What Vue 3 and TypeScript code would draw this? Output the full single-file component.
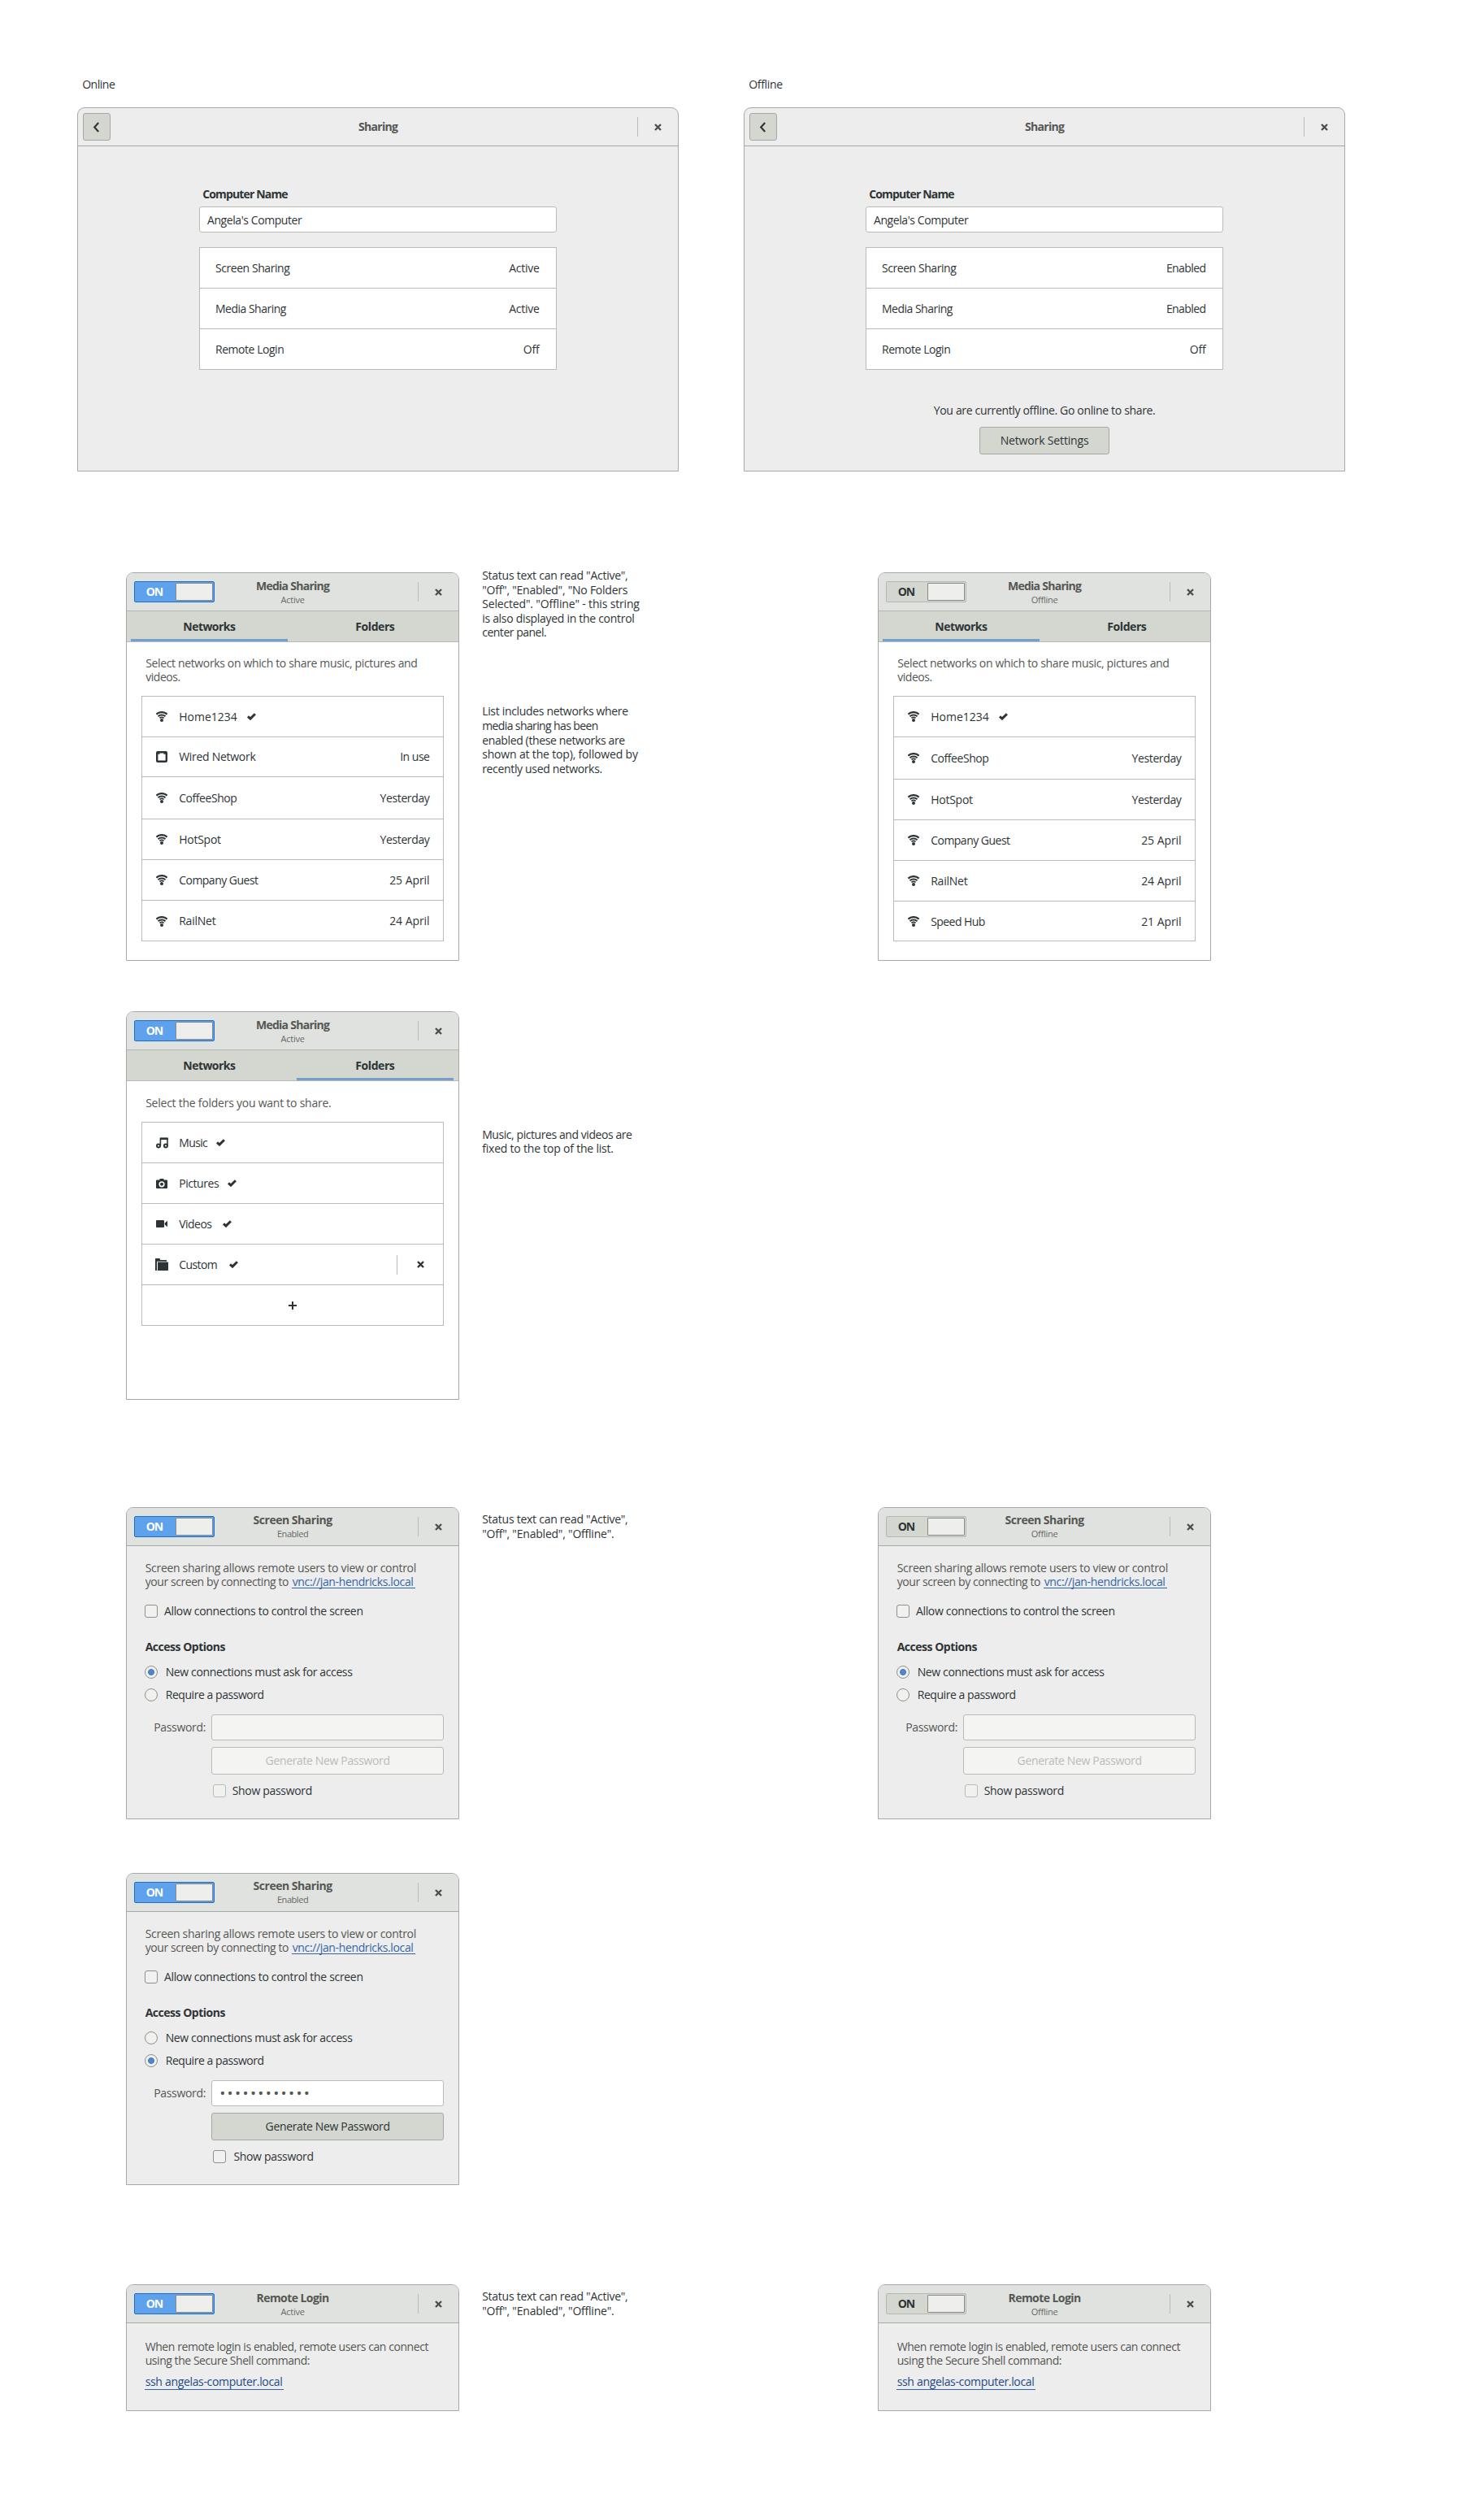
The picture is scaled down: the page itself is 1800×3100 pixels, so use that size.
<script setup lang="ts">
interface Line { text: string; w: number }
interface Item { icon: string; name: Line; check?: number; right?: Line; removable?: boolean; h: number }
interface Note { top: number; lines: Line[] }
interface Dialog {
  kind: 'media' | 'screen' | 'remote'
  title: Line
  sub: Line
  online: boolean
  tab?: number
  desc: Line[]
  items?: Item[]
  add?: boolean
  secret?: boolean
}
interface Row { cls: string; left: Dialog; notes: Note[]; right?: Dialog }

const l = (text: string, w: number): Line => ({ text, w })

// Spreads the letters of a label so that it takes exactly the given width.
const vFit = {
  mounted(el: HTMLElement, binding: { value: number }) {
    const natural = el.getBoundingClientRect().width
    const count = (el.textContent ?? '').length
    const spacing = (binding.value + 1.5 - natural) / count
    el.style.letterSpacing = `${spacing.toFixed(3)}px`
  },
}

const panels = [
  { caption: l('Online', 39.8), offline: false, status: [l('Active', 37), l('Active', 37), l('Off', 19.4)] },
  { caption: l('Offline', 41.3), offline: true, status: [l('Enabled', 48.3), l('Enabled', 48.3), l('Off', 19.4)] },
]
const services = [l('Screen Sharing', 91), l('Media Sharing', 86.6), l('Remote Login', 84)]

const home: Item = { icon: 'wifi', name: l('Home1234', 71.3), check: 11.5, h: 50 }
const wifi = (name: Line, right: Line, h: number): Item => ({ icon: 'wifi', name, right, h })
const yesterday = l('Yesterday', 60.7)
const netDesc = [l('Select networks on which to share music, pictures and', 334), l('videos.', 42.3)]
const statusNote = [l('Status text can read "Active",', 179), l('"Off", "Enabled", "Offline".', 162)]
const screenDesc = [l('Screen sharing allows remote users to view or control', 333)]
const remoteDesc = [l('When remote login is enabled, remote users can connect', 348), l('using the Secure Shell command:', 202)]

const mediaTitle = l('Media Sharing', 90)
const screenTitle = l('Screen Sharing', 96.7)
const remoteTitle = l('Remote Login', 88.7)
const active = l('Active', 29)
const enabled = l('Enabled', 38)
const offline = l('Offline', 32.5)

const rows: Row[] = [
  {
    cls: 'row-networks',
    left: {
      kind: 'media', title: mediaTitle, sub: active, online: true, tab: 0, desc: netDesc,
      items: [
        home,
        { icon: 'wired', name: l('Wired Network', 94), right: l('In use', 36), h: 49 },
        wifi(l('CoffeeShop', 71), yesterday, 52),
        wifi(l('HotSpot', 51.3), yesterday, 50),
        wifi(l('Company Guest', 97), l('25 April', 49), 50),
        wifi(l('RailNet', 45), l('24 April', 49), 50),
      ],
    },
    notes: [
      { top: -5, lines: [
        l('Status text can read "Active",', 179), l('"Off", "Enabled", "No Folders', 178.7),
        l('Selected". "Offline" - this string', 193.3), l('is also displayed in the control', 187), l('center panel.', 78.7),
      ] },
      { top: 79.5, lines: [
        l('List includes networks where', 179.3), l('media sharing has been', 142.3),
        l('enabled (these networks are', 175.3), l('shown at the top), followed by', 191.3), l('recently used networks.', 147.3),
      ] },
    ],
    right: {
      kind: 'media', title: mediaTitle, sub: offline, online: false, tab: 0, desc: netDesc,
      items: [
        home,
        wifi(l('CoffeeShop', 71), yesterday, 52),
        wifi(l('HotSpot', 51.3), yesterday, 50),
        wifi(l('Company Guest', 97), l('25 April', 49), 50),
        wifi(l('RailNet', 45), l('24 April', 49), 50),
        wifi(l('Speed Hub', 66.3), l('21 April', 49), 49),
      ],
    },
  },
  {
    cls: 'row-folders',
    left: {
      kind: 'media', title: mediaTitle, sub: active, online: true, tab: 1, add: true,
      desc: [l('Select the folders you want to share.', 228)],
      items: [
        { icon: 'music', name: l('Music', 34.7), check: 10, h: 50 },
        { icon: 'camera', name: l('Pictures', 48.7), check: 10, h: 50 },
        { icon: 'video', name: l('Videos', 40), check: 12.8, h: 50 },
        { icon: 'folder', name: l('Custom', 46.7), check: 14, h: 50, removable: true },
      ],
    },
    notes: [{ top: 142.5, lines: [l('Music, pictures and videos are', 184), l('fixed to the top of the list.', 161.3)] }],
  },
  {
    cls: 'row-screen',
    left: { kind: 'screen', title: screenTitle, sub: enabled, online: true, desc: screenDesc },
    notes: [{ top: 6, lines: statusNote }],
    right: { kind: 'screen', title: screenTitle, sub: offline, online: false, desc: screenDesc },
  },
  {
    cls: 'row-secret',
    left: { kind: 'screen', title: screenTitle, sub: enabled, online: true, desc: screenDesc, secret: true },
    notes: [],
  },
  {
    cls: 'row-remote',
    left: { kind: 'remote', title: remoteTitle, sub: active, online: true, desc: remoteDesc },
    notes: [{ top: 6, lines: statusNote }],
    right: { kind: 'remote', title: remoteTitle, sub: offline, online: false, desc: remoteDesc },
  },
]

const cells = (row: Row) => [
  { dialog: row.left, notes: null as Note[] | null },
  { dialog: null as Dialog | null, notes: row.notes },
  ...(row.right ? [{ dialog: row.right as Dialog | null, notes: null as Note[] | null }] : []),
]
</script>

<template>
  <main class="board">
    <section class="panels">
      <div v-for="p in panels" :key="p.caption.text" class="panel-col">
        <div class="caption"><span v-fit="p.caption.w" class="t">{{ p.caption.text }}</span></div>
        <div class="panel">
          <header class="panel-head">
            <div class="back">
              <svg width="9" height="13" viewBox="0 0 9 13"><path d="M7.2 1 2.2 6.5l5 5.5" fill="none" stroke="#2e3436" stroke-width="2.1" /></svg>
            </div>
            <span v-fit="47.8" class="t title">Sharing</span>
            <div class="close">
              <svg width="9" height="9" viewBox="0 0 9 9"><path d="M1 1l7 7M8 1l-7 7" stroke="#4c4f4b" stroke-width="2.4" /></svg>
            </div>
          </header>
          <div class="panel-body">
            <div class="name-label"><span v-fit="104.3" class="t">Computer Name</span></div>
            <div class="name-input"><span v-fit="116" class="t">Angela's Computer</span></div>
            <ul class="services">
              <li v-for="(s, i) in services" :key="s.text">
                <span v-fit="s.w" class="t">{{ s.text }}</span>
                <span v-fit="p.status[i].w" class="t">{{ p.status[i].text }}</span>
              </li>
            </ul>
            <div v-if="p.offline" class="offline">
              <span v-fit="272.3" class="t">You are currently offline. Go online to share.</span>
              <button class="settings"><span v-fit="108.5" class="t">Network Settings</span></button>
            </div>
          </div>
        </div>
      </div>
    </section>

    <section v-for="row in rows" :key="row.cls" class="row" :class="row.cls">
      <template v-for="(c, ci) in cells(row)" :key="ci">
        <aside v-if="c.notes" class="notes">
          <div v-for="(n, ni) in c.notes" :key="ni" :style="{ marginTop: n.top + 'px' }">
            <p v-for="line in n.lines" :key="line.text"><span v-fit="line.w" class="t">{{ line.text }}</span></p>
          </div>
        </aside>
        <article v-if="c.dialog" class="dialog" :class="c.dialog.kind">
          <header class="head">
            <div class="switch" :class="{ on: c.dialog.online }">
              <span class="switch-label"><span v-fit="20" class="t">ON</span></span>
              <span class="knob"></span>
            </div>
            <div class="titles">
              <span v-fit="c.dialog.title.w" class="t title">{{ c.dialog.title.text }}</span>
              <span v-fit="c.dialog.sub.w" class="t sub">{{ c.dialog.sub.text }}</span>
            </div>
            <div class="close">
              <svg width="9" height="9" viewBox="0 0 9 9"><path d="M1 1l7 7M8 1l-7 7" stroke="#4c4f4b" stroke-width="2.4" /></svg>
            </div>
          </header>

          <nav v-if="c.dialog.kind === 'media'" class="tabs">
            <div class="tab" :class="{ current: c.dialog.tab === 0 }"><span v-fit="63.7" class="t">Networks</span></div>
            <div class="tab" :class="{ current: c.dialog.tab === 1 }"><span v-fit="47.7" class="t">Folders</span></div>
          </nav>

          <div class="desc" :class="{ single: c.dialog.add }">
            <p v-for="d in c.dialog.desc" :key="d.text"><span v-fit="d.w" class="t">{{ d.text }}</span></p>
            <p v-if="c.dialog.kind === 'screen'" class="connect">
              <span v-fit="176" class="t">your screen by connecting to</span>
              <a class="link vnc"><span v-fit="148.5" class="t">vnc://jan-hendricks.local</span></a>
            </p>
          </div>

          <ul v-if="c.dialog.items" class="list">
            <li v-for="item in c.dialog.items" :key="item.name.text" :style="{ height: item.h + 'px' }">
              <span class="icon">
                <svg v-if="item.icon === 'wifi'" width="14" height="13" viewBox="0 0 14 13">
                  <g fill="none" stroke="#2e3436">
                    <path d="M.4 3.7C3.800.2 10.200.2 13.600 3.700" stroke-width="2.200" />
                    <path d="M2.500 6.200C5 3.900 9 3.900 11.500 6.200" stroke-width="2" />
                    <path d="M4.400 8.300c1.500-1.200 3.700-1.200 5.200 0" stroke-width="1.700" />
                  </g>
                  <circle cx="7" cy="11" r="2" fill="#2e3436" />
                </svg>
                <svg v-else-if="item.icon === 'wired'" width="14" height="14" viewBox="0 0 14 14">
                  <path fill="#2e3436" fill-rule="evenodd" d="M2 0h10a2 2 0 0 1 2 2v10a2 2 0 0 1-2 2H2a2 2 0 0 1-2-2V2a2 2 0 0 1 2-2zM4.5 2.5v1.3H2.4v7.7h9.2V3.8H9.5V2.5z" />
                </svg>
                <svg v-else-if="item.icon === 'music'" width="15" height="14" viewBox="0 0 15 14">
                  <g fill="none" stroke="#2e3436" stroke-width="2">
                    <circle cx="3" cy="10.4" r="2" /><circle cx="11.9" cy="10.4" r="2" />
                    <path d="M5.4 10.4V1.5h8.6v8.9" stroke-width="1.6" />
                    <path d="M5 1.8h9.6" stroke-width="2.6" />
                  </g>
                </svg>
                <svg v-else-if="item.icon === 'camera'" width="14" height="12" viewBox="0 0 14 12">
                  <path fill="#2e3436" d="M4.5 0h5v1.5H13a1 1 0 0 1 1 1V11a1 1 0 0 1-1 1H1a1 1 0 0 1-1-1V2.5a1 1 0 0 1 1-1h3.5z" />
                  <circle cx="7" cy="6.8" r="2.8" fill="none" stroke="#fff" stroke-width="1.6" />
                </svg>
                <svg v-else-if="item.icon === 'video'" width="14" height="9" viewBox="0 0 14 9">
                  <path fill="#2e3436" d="M1 0h8a1 1 0 0 1 1 1v7a1 1 0 0 1-1 1H1a1 1 0 0 1-1-1V1a1 1 0 0 1 1-1zM14 .8v7.4l-3.300-2.600V3.400z" />
                </svg>
                <svg v-else width="16" height="15" viewBox="0 0 16 15">
                  <path fill="#2e3436" d="M.5 0h5l.8 2H14v1.700H2V15H0V.5z" />
                  <path fill="#2e3436" d="M3 4.500h12.500l.5.5v9.500l-.5.5H3z" />
                </svg>
              </span>
              <span v-fit="item.name.w" class="t name">{{ item.name.text }}</span>
              <svg v-if="item.check" class="check" :style="{ marginLeft: item.check + 'px' }" width="11" height="9" viewBox="0 0 11 9">
                <path d="M1 4.400 4 7.100 9.900 1.200" fill="none" stroke="#2e3436" stroke-width="3" />
              </svg>
              <span v-if="item.right" v-fit="item.right.w" class="t right">{{ item.right.text }}</span>
              <span v-if="item.removable" class="remove">
                <svg width="9" height="9" viewBox="0 0 9 9"><path d="M1 1l7 7M8 1l-7 7" stroke="#2e3436" stroke-width="2.4" /></svg>
              </span>
            </li>
            <li v-if="c.dialog.add" class="add">
              <svg width="10" height="10" viewBox="0 0 10 10"><path d="M5 0v10M0 5h10" stroke="#2e3436" stroke-width="2" /></svg>
            </li>
          </ul>

          <div v-if="c.dialog.kind === 'screen'" class="form" :class="{ secret: c.dialog.secret }">
            <div class="option allow"><i class="box"></i><span v-fit="244.5" class="t">Allow connections to control the screen</span></div>
            <h3><span v-fit="98" class="t">Access Options</span></h3>
            <div class="option radio-row"><i class="radio" :class="{ picked: !c.dialog.secret }"></i><span v-fit="229.5" class="t">New connections must ask for access</span></div>
            <div class="option radio-row"><i class="radio" :class="{ picked: c.dialog.secret }"></i><span v-fit="120.7" class="t">Require a password</span></div>
            <div class="password">
              <div class="pw-label"><span v-fit="63.5" class="t">Password:</span></div>
              <div class="pw-input"><span v-if="c.dialog.secret" v-fit="112.8" class="t dots">••••••••••••</span></div>
            </div>
            <button class="generate"><span v-fit="152.7" class="t">Generate New Password</span></button>
            <div class="option show"><i class="box"></i><span v-fit="98" class="t">Show password</span></div>
          </div>

          <p v-if="c.dialog.kind === 'remote'" class="ssh"><a class="link"><span v-fit="168.5" class="t">ssh angelas-computer.local</span></a></p>
        </article>
      </template>
    </section>
  </main>
</template>

<style>
body {
  background: #fff;
}
</style>

<style scoped>
.board {
  box-sizing: border-box;
  width: 1800px;
  height: 3100px;
  padding-top: 95px;
  overflow: hidden;
  background: #fff;
  color: #2e3436;
  font: 14px/18px "Open Sans", "Noto Sans", sans-serif;
}
.board *,
.board *::before,
.board *::after {
  box-sizing: border-box;
}
p,
ul,
h3 {
  margin: 0;
  padding: 0;
  list-style: none;
}
svg {
  display: block;
}
.t {
  display: inline-block;
  flex: none;
  padding: 0 0.5px 0 0.7px;
  white-space: pre;
}

/* Settings panels */
.panels {
  display: flex;
  gap: 80px;
  padding-left: 95px;
}
.panel-col {
  width: 740px;
}
.caption {
  height: 37px;
  padding-left: 5.5px;
}
.panel {
  height: 448px;
  border: 1px solid #a7a9a7;
  border-radius: 9px 9px 0 0;
  background: #ededed;
}
.panel-head {
  display: grid;
  grid-template-columns: 1fr auto 1fr;
  height: 47px;
  border-bottom: 1px solid #a7a9a7;
}
.back {
  display: flex;
  align-items: center;
  justify-content: center;
  width: 34px;
  height: 34px;
  margin: 6px 0 0 6px;
  padding-right: 2px;
  border: 1px solid #a7aaa4;
  border-radius: 3px;
  background: #d3d7cf;
}
.title {
  color: #555753;
  font-weight: 700;
}
.panel-head .title {
  margin-top: 14px;
}
.close {
  display: flex;
  align-items: center;
  justify-content: center;
  justify-self: end;
  width: 50px;
  height: 24px;
  margin-top: 11px;
  border-left: 1px solid #babdb6;
}
.panel-body {
  width: 440px;
  margin: 49.5px auto 0;
}
.name-label {
  height: 24.5px;
  padding-left: 3.5px;
  font-weight: 700;
}
.name-input {
  height: 32px;
  padding: 6.5px 0 0 8.3px;
  border: 1px solid #babdb6;
  border-radius: 3px;
  background: #fff;
}
.services {
  margin-top: 18px;
  border: 1px solid #babdb6;
  background: #fff;
}
.services li {
  display: flex;
  justify-content: space-between;
  height: 50px;
  padding: 16px 20px 0 18.3px;
  border-bottom: 1px solid #babdb6;
}
.services li:last-child {
  height: 49px;
  border-bottom: 0;
}
.offline {
  display: flex;
  flex-direction: column;
  align-items: center;
  margin-top: 40.5px;
}
button {
  display: flex;
  align-items: center;
  justify-content: center;
  height: 34px;
  padding: 0;
  border: 1px solid #a7aaa4;
  border-radius: 3px;
  background: #d3d7cf;
  color: #2e3436;
  font: inherit;
}
.settings {
  width: 160px;
  margin-top: 11.5px;
}

/* Dialog rows */
.row {
  display: grid;
  grid-template-columns: 410px 515px 410px;
  padding-left: 155px;
}
.row-networks {
  height: 478px;
  margin-top: 124px;
}
.row-folders {
  height: 478px;
  margin-top: 62px;
}
.row-screen {
  height: 384px;
  margin-top: 132px;
}
.row-secret {
  height: 384px;
  margin-top: 66px;
}
.row-remote {
  height: 156px;
  margin-top: 122px;
}
.notes {
  padding-left: 27.5px;
}
.notes p {
  height: 17.6px;
}
.dialog {
  border: 1px solid #a7a9a7;
  border-radius: 9px 9px 0 0;
  background: #ededed;
}
.dialog.media {
  background: #fff;
}
.head {
  display: grid;
  grid-template-columns: 1fr auto 1fr;
  height: 47px;
  border-bottom: 1px solid #a7a9a7;
  border-radius: 8px 8px 0 0;
  background: #e0e2df;
}
.media .head {
  border-bottom-color: #b4b7b0;
}
.switch {
  display: flex;
  width: 99px;
  height: 26px;
  margin: 10px 0 0 9px;
  padding: 1px;
  border: 1px solid #b6b9b3;
  border-radius: 2px;
  background: #d3d7cf;
  font-weight: 700;
}
.switch.on {
  border-color: #1c6fcf;
  background: #5ea2ee;
  color: #fff;
}
.switch-label {
  width: 49px;
  padding: 2px 0 0 12px;
}
.knob {
  width: 46px;
  height: 22px;
  border: 1px solid #888a85;
  border-radius: 1px;
  background: #eeeeec;
}
.titles {
  display: flex;
  flex-direction: column;
  align-items: center;
  padding-top: 7px;
}
.screen .titles {
  padding-top: 6px;
}
.sub {
  color: #666864;
  font-size: 11px;
  line-height: 16px;
}
.tabs {
  display: flex;
  height: 38px;
  border-bottom: 1px solid #b8bbb4;
  background: #d3d7cf;
  font-weight: 700;
}
.tab {
  position: relative;
  display: flex;
  justify-content: center;
  width: 204px;
  padding: 10px 1.5px 0 0;
}
.tab.current::after {
  content: "";
  position: absolute;
  bottom: 0;
  left: 5px;
  width: 193px;
  height: 3px;
  background: #729fcf;
}
.desc {
  padding: 17.5px 0 0 22px;
  color: #555753;
}
.desc p {
  height: 17.67px;
}
.media .desc {
  height: 66px;
  padding: 16.5px 0 0 22.5px;
}
.media .desc.single {
  height: 50px;
  padding-top: 17.5px;
}
.list {
  width: 372px;
  margin: 0 0 0 18px;
  border: 1px solid #babdb6;
}
.list li {
  display: flex;
  align-items: center;
  padding: 0 16px;
  border-bottom: 1px solid #babdb6;
}
.list li:last-child {
  border-bottom: 0;
  margin-bottom: -1px;
}
.icon {
  display: flex;
  align-items: center;
  justify-content: center;
  width: 16px;
}
.name {
  margin-left: 12.5px;
}
.right {
  margin-left: auto;
}
.remove {
  display: flex;
  align-items: center;
  justify-content: center;
  width: 57px;
  height: 24px;
  margin-left: auto;
  margin-right: -16px;
  border-left: 1px solid #babdb6;
}
.list .add {
  justify-content: center;
  height: 50px;
}

/* Screen sharing form */
.connect {
  display: flex;
  justify-content: space-between;
  width: 332.5px;
}
.link {
  border-bottom: 1px solid #3465a4;
  color: #3465a4;
}
.vnc {
  display: block;
  width: 151.5px;
  height: 17px;
  line-height: 18px;
}
.form {
  padding: 19.16px 0 0 22px;
}
.option {
  display: flex;
}
.box,
.radio {
  flex: none;
  width: 16px;
  height: 16px;
  border: 1px solid #8e908b;
  border-radius: 3px;
  background: #f1f1f0;
}
.radio {
  display: flex;
  align-items: center;
  justify-content: center;
  border-radius: 50%;
}
.picked::after {
  content: "";
  width: 8px;
  height: 8px;
  border: 1px solid #3b78c4;
  border-radius: 50%;
  background: #5089c8;
}
.allow {
  height: 17px;
}
.allow .t {
  margin: -0.5px 0 0 7.2px;
}
h3 {
  height: 31.5px;
  margin-top: 26.5px;
  font: inherit;
  font-weight: 700;
}
.radio-row {
  height: 28px;
}
.radio-row .t {
  margin: -1.3px 0 0 9px;
}
.password {
  display: flex;
  margin-top: 4px;
}
.pw-label {
  width: 71.5px;
  margin: 7px 0 0 10.5px;
  color: #555753;
}
.pw-input {
  width: 286px;
  height: 32px;
  padding: 6px 0 0 8.5px;
  border: 1px solid #babdb6;
  border-radius: 3px;
  background: #f4f4f2;
  color: #555753;
}
.dots {
  font-size: 19px;
}
.secret .pw-input {
  background: #fff;
}
.generate {
  width: 286px;
  margin: 8px 0 0 82px;
  border-color: #babdb6;
  background: #f4f4f2;
  color: #babdb6;
}
.secret .generate {
  border-color: #a7aaa4;
  background: #d3d7cf;
  color: #2e3436;
}
.show {
  margin: 12px 0 0 84px;
}
.show .box {
  border-color: #babdb6;
}
.secret .show .box {
  border-color: #8e908b;
}
.show .t {
  margin: -0.5px 0 0 7px;
}
.secret .show .t {
  margin-left: 8.7px;
}

/* Remote login */
.remote .desc {
  padding-top: 19.5px;
}
.ssh {
  padding: 8.66px 0 0 22px;
}
.ssh .link {
  display: block;
  width: 171px;
  height: 18.5px;
  color: #204a87;
}
</style>
